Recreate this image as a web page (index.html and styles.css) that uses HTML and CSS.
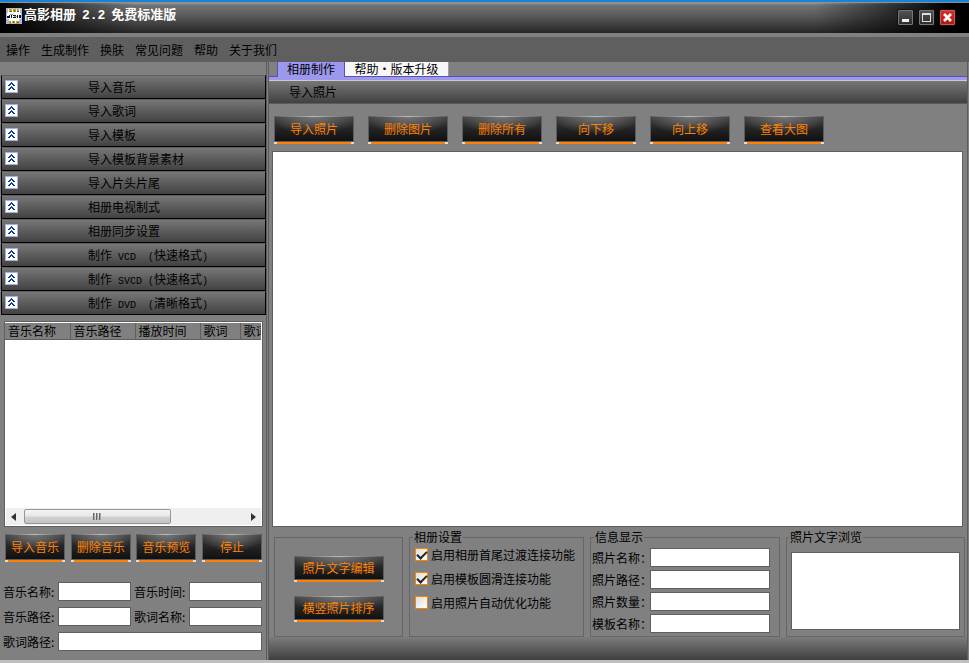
FILE: index.html
```html
<!DOCTYPE html>
<html lang="zh-CN">
<head>
<meta charset="utf-8">
<title>高影相册 2.2 免费标准版</title>
<link rel="stylesheet" href="styles.css">
</head>
<body>
<div class="window">
  <header class="titlebar">
    <svg class="app-icon" width="16" height="16" viewBox="0 0 16 16" shape-rendering="crispEdges" aria-hidden="true">
      <path fill="#a9b5ec" d="M0 0h16v16H0z"/>
      <path fill="#fff" d="M2 1h12v4H2zM1 5h14v6H1zM3 11h10v4H3z"/>
      <path fill="#c3a800" d="M3 1h3v3H3zM7 1h3v3H7zM11 1h2v3h-2zM3 13h2v3H3zM6 13h3v2H6zM10 13h3v3h-3z"/>
      <path fill="#7a6900" d="M4 3h2v1H4zM8 2h1v2H8zM11 3h2v1h-2zM4 14h1v1H4zM7 13h1v2H7zM11 14h2v1h-2z"/>
      <path fill="#151515" d="M1 8h3v2H1zM3 7h1v2H3zM5 7h1v3H5zM7 7h3v1H7zM7 9h3v1H7zM11 7h1v3h-1zM13 7h2v3h-2z"/>
      <path fill="#64b991" d="M4 6h3v1H4zM8 8h3v1H8z"/>
    </svg>
    <h1 class="title">高影相册 <span class="version">2.2</span> 免费标准版</h1>
    <div class="window-buttons">
      <button class="win-btn" type="button" aria-label="最小化"><svg width="9" height="9" viewBox="0 0 9 9" shape-rendering="crispEdges"><path fill="#f2f2f2" d="M1 6h7v3H1z"/></svg></button>
      <button class="win-btn" type="button" aria-label="最大化"><svg width="9" height="9" viewBox="0 0 9 9" shape-rendering="crispEdges"><path fill="#dedede" fill-rule="evenodd" d="M0 0h9v9H0zM1 2h7v6H1z"/></svg></button>
      <button class="win-btn close" type="button" aria-label="关闭"><svg width="9" height="9" viewBox="0 0 9 9"><path stroke="#fff" stroke-width="2.6" d="M1 1l7 7M8 1l-7 7"/></svg></button>
    </div>
  </header>
  <nav class="menu">
    <a href="#">操作</a><a href="#">生成制作</a><a href="#">换肤</a><a href="#">常见问题</a><a href="#">帮助</a><a href="#">关于我们</a>
  </nav>
  <main class="main">
    <aside class="side">
      <svg class="defs" width="0" height="0" aria-hidden="true"><symbol id="chev" viewBox="0 0 13 13"><path fill="#a7b1da" d="M0 0h13v13H0z"/><path fill="#fff" d="M1 1h11v11H1z"/><path fill="#0a3ea2" d="M6 2h1v1h1v1h1v1h1v1H8V5H7V4H6v1H5v1H3V5h1V4h1V3h1zM6 6h1v1h1v1h1v1h1v1H8V9H7V8H6v1H5v1H3V9h1V8h1V7h1z"/></symbol></svg>
      <div class="accordion">
        <button class="acc" type="button"><svg><use href="#chev"/></svg><span>导入音乐</span></button>
        <button class="acc" type="button"><svg><use href="#chev"/></svg><span>导入歌词</span></button>
        <button class="acc" type="button"><svg><use href="#chev"/></svg><span>导入模板</span></button>
        <button class="acc" type="button"><svg><use href="#chev"/></svg><span>导入模板背景素材</span></button>
        <button class="acc" type="button"><svg><use href="#chev"/></svg><span>导入片头片尾</span></button>
        <button class="acc" type="button"><svg><use href="#chev"/></svg><span>相册电视制式</span></button>
        <button class="acc" type="button"><svg><use href="#chev"/></svg><span>相册同步设置</span></button>
        <button class="acc" type="button"><svg><use href="#chev"/></svg><span>制作<i class="mono"> VCD  (</i>快速格式<i class="mono">)</i></span></button>
        <button class="acc" type="button"><svg><use href="#chev"/></svg><span>制作<i class="mono"> SVCD (</i>快速格式<i class="mono">)</i></span></button>
        <button class="acc" type="button"><svg><use href="#chev"/></svg><span>制作<i class="mono"> DVD  (</i>清晰格式<i class="mono">)</i></span></button>
      </div>
      <div class="list">
        <div class="list-view">
          <table class="songs">
            <thead><tr><th class="wide">音乐名称</th><th class="wide">音乐路径</th><th class="wide">播放时间</th><th class="narrow">歌词</th><th class="wide">歌词路径</th></tr></thead>
          </table>
        </div>
        <div class="scrollbar">
          <svg class="arrow" viewBox="0 0 5 8"><path fill="#333" d="M5 0v8L0 4z"/></svg>
          <div class="track"><div class="thumb"><svg width="8" height="7" viewBox="0 0 8 7" shape-rendering="crispEdges"><path fill="#666" d="M0 0h1v7H0zM3 0h1v7H3zM6 0h1v7H6z"/><path fill="#aaa" d="M1 0h1v7H1zM4 0h1v7H4zM7 0h1v7H7z"/></svg></div></div>
          <svg class="arrow" viewBox="0 0 5 8"><path fill="#333" d="M0 0v8l5-4z"/></svg>
        </div>
      </div>
      <div class="side-buttons">
        <button class="btn" type="button">导入音乐</button>
        <button class="btn" type="button">删除音乐</button>
        <button class="btn" type="button">音乐预览</button>
        <button class="btn" type="button">停止</button>
      </div>
      <form class="song-form">
        <label for="song-name">音乐名称:</label><input id="song-name" type="text">
        <label class="second" for="song-time">音乐时间:</label><input id="song-time" type="text">
        <label for="song-path">音乐路径:</label><input id="song-path" type="text">
        <label class="second" for="lyric-name">歌词名称:</label><input id="lyric-name" type="text">
        <label for="lyric-path">歌词路径:</label><input id="lyric-path" class="full" type="text">
      </form>
    </aside>
    <section class="content">
      <div class="tabs" role="tablist">
        <button class="tab active" type="button" role="tab" aria-selected="true">相册制作</button>
        <button class="tab" type="button" role="tab" aria-selected="false">帮助・版本升级</button>
      </div>
      <h2 class="panel-head">导入照片</h2>
      <div class="toolbar">
        <button class="btn" type="button">导入照片</button>
        <button class="btn" type="button">删除图片</button>
        <button class="btn" type="button">删除所有</button>
        <button class="btn" type="button">向下移</button>
        <button class="btn" type="button">向上移</button>
        <button class="btn" type="button">查看大图</button>
      </div>
      <div class="photos"></div>
      <div class="groups">
        <div class="group actions">
          <button class="btn" type="button">照片文字编辑</button>
          <button class="btn" type="button">横竖照片排序</button>
        </div>
        <fieldset class="group settings">
          <legend>相册设置</legend>
          <label class="check"><input type="checkbox" checked>启用相册首尾过渡连接功能</label>
          <label class="check"><input type="checkbox" checked>启用模板圆滑连接功能</label>
          <label class="check"><input type="checkbox">启用照片自动优化功能</label>
        </fieldset>
        <fieldset class="group info">
          <legend>信息显示</legend>
          <div class="info-row"><label for="photo-name">照片名称：</label><input id="photo-name" type="text"></div>
          <div class="info-row"><label for="photo-path">照片路径：</label><input id="photo-path" type="text"></div>
          <div class="info-row"><label for="photo-count">照片数量：</label><input id="photo-count" type="text"></div>
          <div class="info-row"><label for="tpl-name">模板名称：</label><input id="tpl-name" type="text"></div>
        </fieldset>
        <fieldset class="group preview">
          <legend>照片文字浏览</legend>
          <textarea aria-label="照片文字浏览"></textarea>
        </fieldset>
      </div>
      <div class="footer"></div>
    </section>
  </main>
</div>
</body>
</html>
```
FILE: styles.css
```css
* { box-sizing: border-box; }

body {
  margin: 0;
  background: #808080;
  color: #000;
  font: 12px/14px "Noto Sans CJK SC", sans-serif;
}

button, input, textarea {
  margin: 0;
  padding: 0;
  font: inherit;
  color: inherit;
}

.window {
  display: flex;
  flex-direction: column;
  min-height: 100vh;
  border-bottom: 3px solid #bfbfbf;
}

/* Title bar */
.titlebar {
  display: flex;
  align-items: flex-start;
  height: 33px;
  padding: 6px 13px 0 6px;
  border-top: 1px solid #1683d8;
  background:
    linear-gradient(#1683d8, #1683d8) top / 100% 1px no-repeat,
    linear-gradient(90deg, #000 0, transparent 14%, transparent 84%, #000 98%) 0 2px no-repeat,
    linear-gradient(#777 0, #999 2px, #747474 4px, #565656 50%, #262626 100%);
}

.app-icon { flex: none; margin-top: 1px; }

.title {
  flex: 1;
  margin: 0 0 0 2px;
  color: #fff;
  font-size: 13px;
  line-height: 14px;
  font-weight: 700;
  white-space: pre;
}

.version {
  margin: 0 3px;
  font-family: "Liberation Mono", monospace;
}

.window-buttons { display: flex; gap: 4px; margin-top: 2px; }

.win-btn {
  display: grid;
  place-items: center;
  width: 17px;
  height: 17px;
  border: 1px solid #111;
  border-radius: 2px;
  background: linear-gradient(#555, #2c2c2c);
  box-shadow: inset 0 0 0 1px #777;
}

.win-btn.close {
  background: linear-gradient(#e42b20, #a91812);
  box-shadow: inset 0 0 0 1px #c95b55;
}

/* Menu */
.menu {
  display: flex;
  gap: 11px;
  height: 29px;
  padding: 6px;
  border-top: 4px solid #808080;
  background: #5f5f5f;
}

.menu a { color: #000; text-decoration: none; }

.main { display: flex; flex: 1; }

/* Left panel */
.side {
  display: flex;
  flex-direction: column;
  flex: none;
  width: 267px;
  padding: 13px 0 9px 1px;
  border-right: 1px solid #5c5c5c;
}

.defs { position: absolute; }

.acc {
  display: flex;
  width: 100%;
  height: 24px;
  padding: 4px 0 0 3px;
  border: solid #000;
  border-width: 1px 1px 1px;
  border-top-color: #606060;
  background: linear-gradient(#777, #424242);
}

.acc svg { flex: none; width: 13px; height: 13px; shape-rendering: crispEdges; }
.acc span { margin-left: 70px; white-space: pre; }

.mono {
  font: 10px/14px "Liberation Mono", monospace;
}

.list {
  display: flex;
  flex-direction: column;
  flex: 1;
  margin: 6px 3px 0;
  border: 1px solid #5f5f5f;
  background: #fff;
}

.list-view {
  flex: 1;
  overflow: hidden;
  border: solid #fff;
  border-width: 1px 1px 0 0;
}

.songs {
  width: 300px;
  table-layout: fixed;
  border-collapse: collapse;
}

.songs th {
  height: 16px;
  padding: 0 0 0 3px;
  border: solid #5f5f5f;
  border-width: 0 1px 1px 0;
  background: #808080;
  font-weight: 400;
  text-align: left;
  line-height: 15px;
  white-space: nowrap;
}

.songs .wide { width: 65px; }
.songs .narrow { width: 40px; }

.scrollbar {
  display: flex;
  align-items: center;
  height: 17px;
  margin: 0 1px 1px;
  padding: 0 5px;
  background: #efefef;
}

.arrow { flex: none; width: 5px; height: 8px; }
.track { flex: 1; padding: 0 8px; }

.thumb {
  display: grid;
  place-items: center;
  width: 67%;
  height: 15px;
  border: 1px solid #979797;
  border-radius: 2px;
  background: linear-gradient(#f5f5f5, #e8e8e8 48%, #d2d2d4 52%, #c2c2c6);
}

.btn {
  height: 28px;
  padding-bottom: 2px;
  border: 0;
  color: #ff8000;
  white-space: nowrap;
  background:
    linear-gradient(90deg, #ddd 3px, #ff8000 3px calc(100% - 3px), #ddd calc(100% - 3px)) bottom / 100% 2px no-repeat,
    linear-gradient(#5c5c5c, #5c5c5c) left / 1px 100% no-repeat,
    linear-gradient(#5c5c5c, #5c5c5c) right / 1px 100% no-repeat,
    linear-gradient(90deg, #5c5c5c, #bbb, #5c5c5c) top / 100% 1px no-repeat,
    linear-gradient(#5c5c5c, #5c5c5c) 0 calc(100% - 2px) / 100% 1px no-repeat,
    radial-gradient(ellipse 55% 65% at 50% 0, #777, transparent),
    linear-gradient(#444, #242424 45%, #0c0c0c);
}

.side-buttons {
  display: flex;
  justify-content: space-between;
  margin: 7px 4px 0;
}

.side-buttons .btn { width: 60px; }

.song-form {
  display: grid;
  grid-template-columns: 55px 73px 58px 1fr;
  row-gap: 6px;
  align-items: center;
  margin: 20px 4px 0 2px;
}

.song-form .second { margin-left: 3px; }
.song-form .full { grid-column: 2 / -1; }

input[type="text"], textarea {
  display: block;
  width: 100%;
  min-width: 0;
  height: 19px;
  border: 1px solid #5f5f5f;
  border-radius: 0;
  background: #fff;
}

/* Right panel */
.content {
  display: flex;
  flex-direction: column;
  flex: 1;
  min-width: 0;
  margin: 0 1px;
  border: solid #5c5c5c;
  border-width: 0 1px;
}

.tabs {
  display: flex;
  flex: none;
  height: 19px;
  padding-left: 8px;
  background:
    linear-gradient(#5751b5 1px, #9b98ed 1px 4px, #ccc 4px) bottom / 100% 5px no-repeat;
}

.tab {
  width: 104px;
  height: 14px;
  border: solid #91a5a5;
  border-width: 0 1px 0 0;
  background: #f7f7f7;
  line-height: 12px;
  white-space: nowrap;
}

.tab.active {
  width: 68px;
  height: 15px;
  padding-bottom: 2px;
  border: solid #5751b5;
  border-width: 0 1px;
  background: #9b98ed;
}

.panel-head {
  flex: none;
  height: 23px;
  margin: 0;
  padding: 4px 20px;
  border-bottom: 1px solid #5c5c5c;
  background: linear-gradient(#777, #414141);
  font-size: 12px;
  font-weight: 400;
}

.toolbar {
  display: flex;
  gap: 14px;
  padding: 12px 5px 7px;
}

.toolbar .btn { width: 80px; }

.photos {
  flex: 1;
  margin: 0 4px 0 3px;
  border: 1px solid #5f5f5f;
  background: #fff;
}

.groups {
  display: grid;
  grid-template-columns: 129fr 175fr 190fr 179fr;
  gap: 6px;
  height: 105px;
  margin: 3px 2px 2px 5px;
}

.group {
  min-width: 0;
  margin: 0;
  padding: 0 5px;
  border: 1px solid #666;
}

.group legend {
  height: 14px;
  margin-left: -2px;
  padding: 0 1px;
}

.actions {
  display: flex;
  flex-direction: column;
  align-items: center;
  gap: 14px;
  margin-top: 7px;
  padding-top: 18px;
}

.actions .btn { width: 90px; height: 26px; }

.check {
  display: flex;
  align-items: center;
  gap: 3px;
  height: 24px;
  padding-bottom: 3px;
  white-space: nowrap;
}

.check input {
  flex: none;
  display: grid;
  place-items: center;
  width: 13px;
  height: 13px;
  border: 1px solid #ff8000;
  background: linear-gradient(135deg, #ddd, #fff);
  appearance: none;
}

.check input:checked::before {
  content: "";
  width: 8px;
  height: 4px;
  margin-bottom: 2px;
  border: solid #222;
  border-width: 0 0 2px 2px;
  transform: rotate(-45deg);
}

.info { padding: 0 9px 0 1px; }
.info legend { margin-left: 2px; }

.info-row {
  display: grid;
  grid-template-columns: 58px 1fr;
  align-items: center;
  margin: 4px 0 3px;
}

.info-row + .info-row { margin-top: 3px; }
.info-row label { white-space: nowrap; }

.preview { padding: 8px 4px 0; }
.preview textarea { height: 78px; resize: none; }

.footer {
  height: 23px;
  background: linear-gradient(#7c7c7c, #3f3f3f);
}
```
